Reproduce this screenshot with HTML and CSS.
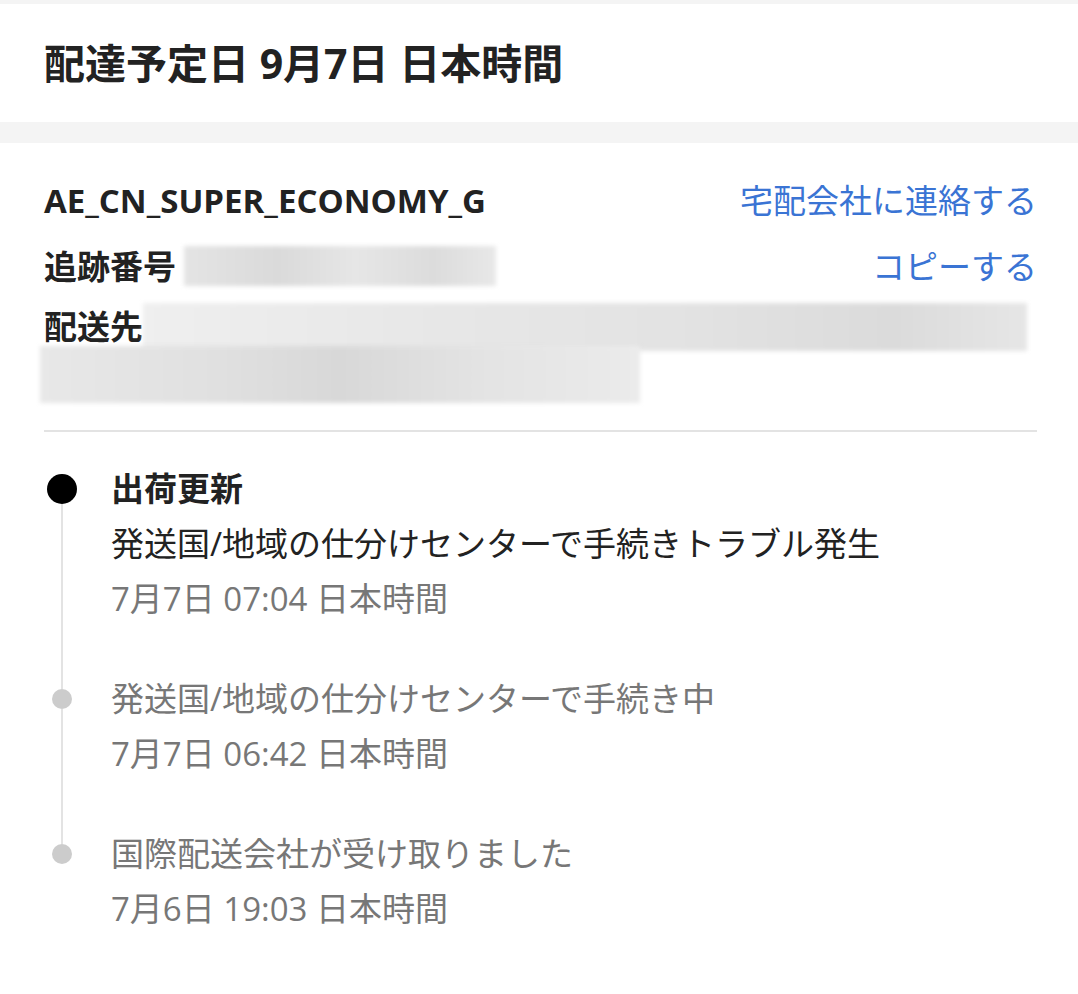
FILE: index.html
```html
<!DOCTYPE html>
<html lang="ja">
<head>
<meta charset="utf-8">
<title>配送状況</title>
<link rel="stylesheet" href="styles.css">
</head>
<body>
<header class="eta">
  <h1 class="eta-title">配達予定日 9月7日 日本時間</h1>
</header>
<main class="card">
  <div class="info-row">
    <span class="label">AE_CN_SUPER_ECONOMY_G</span>
    <a class="link">宅配会社に連絡する</a>
  </div>
  <div class="info-row">
    <div class="label-group">
      <span class="label">追跡番号</span>
      <span class="blur blur-track"></span>
    </div>
    <a class="link">コピーする</a>
  </div>
  <div class="address">
    <div class="address-line">
      <span class="label">配送先</span>
      <span class="blur blur-addr1"></span>
    </div>
    <span class="blur blur-addr2"></span>
  </div>
  <hr class="divider">
  <ol class="timeline">
    <li class="step step-current">
      <div class="marker">
        <span class="seg seg-top seg-hidden"></span>
        <span class="dot"></span>
        <span class="seg seg-bottom"></span>
      </div>
      <div class="step-body">
        <p class="step-title">出荷更新</p>
        <p class="step-desc">発送国/地域の仕分けセンターで手続きトラブル発生</p>
        <p class="step-time">7月7日 07:04 日本時間</p>
      </div>
    </li>
    <li class="step">
      <div class="marker">
        <span class="seg seg-top"></span>
        <span class="dot"></span>
        <span class="seg seg-bottom"></span>
      </div>
      <div class="step-body">
        <p class="step-desc">発送国/地域の仕分けセンターで手続き中</p>
        <p class="step-time">7月7日 06:42 日本時間</p>
      </div>
    </li>
    <li class="step">
      <div class="marker">
        <span class="seg seg-top"></span>
        <span class="dot"></span>
        <span class="seg seg-bottom seg-hidden"></span>
      </div>
      <div class="step-body">
        <p class="step-desc">国際配送会社が受け取りました</p>
        <p class="step-time">7月6日 19:03 日本時間</p>
      </div>
    </li>
  </ol>
</main>
</body>
</html>
```
FILE: styles.css
```css
* { box-sizing: border-box; }
html, body {
  margin: 0;
  padding: 0;
}
body {
  background: #f4f4f4;
  padding-top: 4px;
  font-family: "Open Sans", "Noto Sans CJK JP", sans-serif;
  color: #222;
}
.eta {
  background: #fff;
  height: 118px;
  display: flex;
  align-items: center;
  padding: 0 44px;
  margin-bottom: 21px;
}
.eta-title {
  margin: 0;
  font-size: 41px;
  font-weight: 700;
  line-height: 1;
  color: #222;
}
.card {
  background: #fff;
  padding: 24px 41px 60px 44px;
  min-height: 851px;
}
.info-row {
  display: flex;
  justify-content: space-between;
  align-items: center;
  height: 66px;
}
.label-group {
  display: flex;
  align-items: center;
}
.label {
  font-size: 33px;
  font-weight: 700;
  color: #222;
  line-height: 1;
}
.link {
  font-size: 33px;
  color: #3a74d4;
  line-height: 1;
  cursor: pointer;
}
.blur {
  display: block;
  background: linear-gradient(90deg, #e4e4e4, #dadada 30%, #e6e6e6 55%, #dcdcdc 80%, #e8e8e8);
  filter: blur(2px);
}
.blur-track {
  width: 312px;
  height: 40px;
  margin-left: 8px;
}
.address {
  display: flex;
  flex-direction: column;
  height: 110px;
}
.address-line {
  display: flex;
  align-items: center;
  height: 55px;
}
.blur-addr1 {
  width: 884px;
  height: 48px;
  margin-left: 0;
  background: linear-gradient(90deg, #efefef, #e8e8e8 30%, #e3e3e3 60%, #dbdbdb 85%, #e6e6e6);
}
.blur-addr2 {
  width: 600px;
  height: 57px;
  margin-left: -4px;
  margin-top: -8px;
  background: linear-gradient(90deg, #e8e8e8, #e0e0e0 30%, #d8d8d8 50%, #e4e4e4 75%, #ebebeb);
}
.divider {
  border: 0;
  height: 2px;
  background: #e3e3e3;
  margin: 21px 0 29px 0;
}
.timeline {
  list-style: none;
  margin: 0;
  padding: 0;
}
.step {
  display: grid;
  grid-template-columns: 67px 1fr;
}
.marker {
  display: flex;
  flex-direction: column;
  align-items: center;
  width: 36px;
}
.seg {
  width: 2px;
  background: #e3e3e3;
}
.seg-top { height: 17.5px; }
.seg-bottom { flex: 1; }
.seg-hidden { background: transparent; }
.dot {
  width: 20px;
  height: 20px;
  border-radius: 50%;
  background: #cccccc;
  flex: none;
}
.step-current .seg-top { height: 12.5px; }
.step-current .dot {
  width: 30px;
  height: 30px;
  background: #000;
}
.step-body {
  padding-bottom: 45px;
}
.step:last-child .step-body { padding-bottom: 0; }
.step-body p {
  margin: 0;
  font-size: 33px;
  line-height: 55px;
  color: #777;
}
.step-body .step-title {
  font-weight: 700;
  color: #222;
}
.step-current .step-desc {
  color: #222;
}
```
